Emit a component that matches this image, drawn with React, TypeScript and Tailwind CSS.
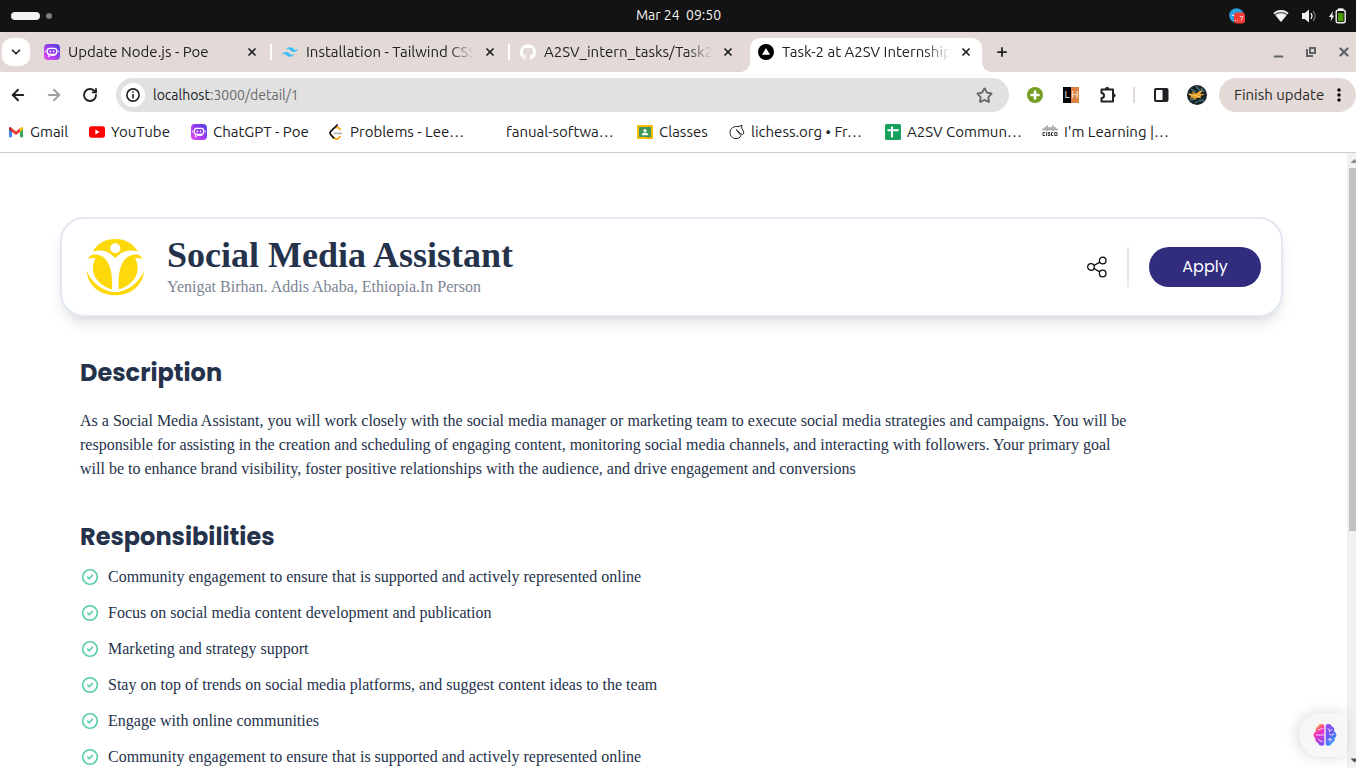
import React from "react";
import { SiTailwindcss, SiGithub } from "react-icons/si";
import { ArrowLeft, ArrowRight, ChevronDown, Minus, Plus, RotateCw, Star, X } from "lucide-react";

function PoeIcon({ id }: { id: string }) {
  return (
    <svg width="16" height="16" viewBox="0 0 16 16" className="block shrink-0" aria-hidden="true">
      <defs>
        <linearGradient id={id} x1="1" y1="0" x2="0" y2="1">
          <stop offset="0" stopColor="#4b3fe0" />
          <stop offset=".5" stopColor="#9b3df0" />
          <stop offset="1" stopColor="#f04bf5" />
        </linearGradient>
      </defs>
      <rect width="16" height="16" rx="4" fill={`url(#${id})`} />
      <rect x="3.2" y="4.4" width="9.6" height="6" rx="2.4" fill="none" stroke="#fff" strokeWidth="1.2" />
      <path d="M6.400 6.600v1.600M9.600 6.600v1.600" stroke="#fff" strokeWidth="1.300" />
      <path d="M1.8 6.5v1.8M14.2 6.5v1.8" stroke="#fff" strokeWidth="1" />
      <path d="M4.600 10.400v2.400l2-1.400h4.800" fill="none" stroke="#fff" strokeWidth="1" />
    </svg>
  );
}

function TriangleIcon() {
  return (
    <svg width="16" height="16" viewBox="0 0 16 16" className="block shrink-0" aria-hidden="true">
      <circle cx="8" cy="8" r="8" />
      <path d="M8 4l4 6.8H4z" fill="#fff" />
    </svg>
  );
}

function GmailIcon() {
  return (
    <svg width="16" height="16" viewBox="0 0 16 16" aria-hidden="true">
      <path d="M1 4v9.2h3V7z" fill="#4285f4" />
      <path d="M15 4v9.2h-3V7z" fill="#34a853" />
      <path d="M12 4.5L13 3.2c1-.7 2 0 2 1.2v1.2l-3 2.3z" fill="#fbbc04" />
      <path d="M4 4.5L3 3.2c-1-.7-2 0-2 1.2v1.2l3 2.3z" fill="#c5221f" />
      <path d="M4 4.2l4 3.1 4-3.1v3.7l-4 3-4-3z" fill="#ea4335" />
    </svg>
  );
}

function YouTubeIcon() {
  return (
    <svg width="16" height="16" viewBox="0 0 16 16" aria-hidden="true">
      <rect y="2.2" width="16" height="11.6" rx="2.4" fill="#f00" />
      <path d="M6.4 5.6v4.8L10.6 8z" fill="#fff" />
    </svg>
  );
}

function LeetIcon() {
  return (
    <svg width="16" height="16" viewBox="0 0 16 16" fill="none" strokeLinecap="round" strokeWidth="1.7" aria-hidden="true">
      <path d="M12.2 5.4l-1.8-1.6a2 2 0 0 0-2.6 0M3.2 11l3.4 3.4a2.6 2.6 0 0 0 3.6 0l1.8-1.8" stroke="#ffa116" />
      <path d="M6.4 9.3h7" stroke="#b3b3b3" />
      <path d="M9.2 1L3 7.2a2.7 2.7 0 0 0 0 3.8l2.6 2.8" stroke="#111" />
    </svg>
  );
}

function ClassroomIcon() {
  return (
    <svg width="16" height="16" viewBox="0 0 16 16" aria-hidden="true">
      <rect y="1" width="16" height="14" rx="1" fill="#fbbc04" />
      <rect x="2" y="3" width="12" height="10" fill="#3c9654" />
      <circle cx="8" cy="6.6" r="1.6" fill="#fff" />
      <path d="M4.6 11.2c0-1.8 1.7-2.4 3.4-2.4s3.4.6 3.4 2.4z" fill="#fff" />
      <path d="M9 13h4v1.4H9z" fill="#dba100" />
    </svg>
  );
}

function LichessIcon() {
  return (
    <svg width="16" height="16" viewBox="0 0 16 16" fill="none" stroke="#222" strokeWidth="1" strokeLinejoin="round" strokeLinecap="round" aria-hidden="true">
      <path d="M9.500 2.600L13 1.200l-.3 2.800c1 1.700 1.900 3.500 2.200 5.200l-1.400 1.300-1.600-.7L7.500 6M9.500 2.600C5.200 1.500 1 4.200 1 8.600c0 3.400 2.600 6 6 6 2.300 0 4-1 5-2.800-.5-1.300-2.800-2.800-4.500-5.800" />
    </svg>
  );
}

function SheetIcon() {
  return (
    <svg width="16" height="16" viewBox="0 0 16 16" aria-hidden="true">
      <rect width="16" height="16" rx="1.6" fill="#16a05d" />
      <path d="M7 2.400v11.200M2.400 6.200h11.200" stroke="#fff" strokeWidth="2" />
    </svg>
  );
}

function CiscoIcon() {
  return (
    <svg width="16" height="16" viewBox="0 0 16 16" fill="none" stroke="#333" aria-hidden="true">
      <path d="M1 4.600v1.800M3 3.200v3.200M5 1.500v5.500M7 3.200v3.200M9 3.200v3.200M11 1.500v5.500M13 3.200v3.200M15 4.600v1.800" strokeWidth=".8" />
      <path d="M3.200 8.600H1v2.900h2.200M4.700 8v4M8.200 8.600H6.400v1.400h1.500v1.500H6M11.200 8.600H9.500v2.900h1.700M12.700 8.600h2.300v2.900h-2.300z" strokeWidth="1" />
    </svg>
  );
}

function PuzzleIcon() {
  return (
    <svg width="18" height="18" viewBox="0 0 18 18" fill="none" stroke="#202124" strokeWidth="2" strokeLinejoin="round" aria-hidden="true">
      <path d="M2.500 3.500H14v12H2.500v-3.500a2.500 2.500 0 0 0 0-5z" />
      <path d="M6.500 3a1.700 1.700 0 0 1 3.400 0zM14.500 7.800a1.700 1.700 0 0 1 0 3.400z" fill="#202124" strokeWidth="1" />
    </svg>
  );
}

function AvatarIcon() {
  return (
    <svg width="20" height="20" viewBox="0 0 20 20" aria-hidden="true">
      <circle cx="10" cy="10" r="10" fill="#18242a" />
      <path d="M4 4l5 3M9 1l4 5M14 3l3 4M3 15l5-1M12 16l5-1M8 18l3-2" stroke="#4a7482" strokeWidth="1.300" />
      <path d="M1 8.500l5 .5-1-3 4 2.500 6-4-2 4 5 .8-5 2 1 2-4-.5-2 2-2-1.800-3 .5 1-2z" fill="#e09a26" />
      <path d="M2 9l7 2 6-5M9 11l5 1" stroke="#f9d36a" fill="none" strokeWidth=".9" />
    </svg>
  );
}

function TelegramTray() {
  return (
    <svg width="16" height="16" viewBox="0 0 16 16" aria-hidden="true">
      <circle cx="7.500" cy="7.500" r="7.300" fill="#2aa1de" />
      <path d="M2.500 7.500l3-1.300v2.400z" fill="#fff" />
      <rect x="5" y="4.500" width="11" height="11" rx="3" fill="#f23c34" />
      <path d="M6 12.500h1M8 12.500h1M10.800 8.500h3l-1.800 4.300" fill="none" stroke="#ffc9c5" />
    </svg>
  );
}

function WifiIcon() {
  return (
    <svg width="16" height="16" viewBox="0 0 16 16" aria-hidden="true">
      <path d="M.5 5c4.200-4 10.800-4 15 0L8 14z" fill="#777" />
      <path d="M.5 5c4.200-4 10.800-4 15 0l-.9 1.200C10.500 3 5.500 3 1.400 6.200z" fill="#f2f2f2" />
      <path d="M2.500 7.200c3.400-2.300 7.600-2.300 11 0L8 14z" fill="#f2f2f2" />
    </svg>
  );
}

function VolumeIcon() {
  return (
    <svg width="16" height="16" viewBox="0 0 16 16" fill="none" aria-hidden="true">
      <path d="M1 5h2.800L8 1.500v13L3.800 11H1z" fill="#f2f2f2" />
      <path d="M9.800 5.300c1.300 1.500 1.300 3.900 0 5.400" stroke="#f2f2f2" strokeWidth="1.300" />
      <path d="M12 3c2.800 2.800 2.800 7.200 0 10" stroke="#777" strokeWidth="1.200" />
    </svg>
  );
}

function BatteryIcon() {
  return (
    <svg width="17" height="16" viewBox="0 0 17 16" aria-hidden="true">
      <path d="M4 3L0 9h2.300L1.500 13.500 5.300 7.500H3.200z" fill="#f2f2f2" />
      <rect x="7.200" y="2.200" width="9" height="12.600" rx="1.800" fill="#131313" stroke="#f2f2f2" strokeWidth="1.400" />
      <path d="M9 .3h5.400v2H9z" fill="#f2f2f2" />
      <path d="M9 5h5.500v8.200H9z" fill="#4e9a06" />
    </svg>
  );
}

function CompanyLogo() {
  return (
    <svg width="60" height="60" viewBox="0 0 60 60" fill="#fdd80a" className="block shrink-0" role="img" aria-label="Yenigat Birhan">
      <path d="M7.500 14.500C12.500 6.500 20 2 30.200 2S48 6.500 53 14.500c-7-1.800-12.500-1.200-17.500 2L30.300 21 25 16.500C20 13.300 14.500 12.800 7.500 14.500z" />
      <circle cx="30.300" cy="11.300" r="5" fill="#fff" />
      <path d="M3 22c1.500-4 5-5 9.500-4.300 5.500.8 9 4.800 11.300 9.600 3 6.800 3.800 15.700 3.200 25.200C20.500 50.500 14.500 46.500 11 41.500c-3.500-5.500-4-12.500-1.500-18 .4-1.200.7-1.700 1.100-2.300-2.600-.4-5-.2-7.600.8z" />
      <path d="M57.600 22c-1.500-4-5-5-9.500-4.300-5.500.8-9 4.800-11.300 9.600-3 6.800-3.800 15.700-3.200 25.200 6.500-2 12.500-6 16-11 3.500-5.500 4-12.500 1.500-18-.4-1.200-.7-1.700-1.100-2.300 2.600-.4 5-.2 7.600.8z" />
      <path d="M1.800 34C6 44 13.500 51.500 27 55h6.500C47 51.500 54.500 44 58.800 34c-.3 14-13 24.300-28.500 24.300S2.200 48 1.800 34z" />
    </svg>
  );
}

function ShareIcon() {
  return (
    <svg width="22" height="22" viewBox="0 0 22 22" fill="none" stroke="#0a0a0a" strokeWidth="1.300" aria-hidden="true">
      <circle cx="5" cy="11" r="3.300" />
      <circle cx="16.700" cy="4.500" r="3.300" />
      <circle cx="16.700" cy="17.500" r="3.300" />
      <path d="M7.900 9.500l6-3.400M7.900 12.500l6 3.400" />
    </svg>
  );
}

function CheckCircle() {
  return (
    <svg width="20" height="20" viewBox="0 0 20 20" fill="none" stroke="#56cdad" strokeWidth="1.600" strokeLinecap="round" strokeLinejoin="round" className="block shrink-0" aria-hidden="true">
      <circle cx="10" cy="10" r="7.300" />
      <path d="M7.600 10.200l1.600 1.500 3.200-3.300" />
    </svg>
  );
}

function BrainIcon() {
  return (
    <svg width="24" height="24" viewBox="0 0 24 24" aria-hidden="true">
      <defs>
        <linearGradient id="brain-left" x1=".3" y1="0" x2=".7" y2="1">
          <stop offset="0" stopColor="#ffa51f" />
          <stop offset=".4" stopColor="#f02fc0" />
          <stop offset="1" stopColor="#7d4df5" />
        </linearGradient>
        <linearGradient id="brain-right" x1="0" y1="0" x2=".6" y2="1">
          <stop offset="0" stopColor="#9a4cf0" />
          <stop offset=".5" stopColor="#6a55f5" />
          <stop offset="1" stopColor="#28a5ff" />
        </linearGradient>
      </defs>
      <path d="M11.300 2.500C9.500.3 6 .8 5.300 3.500 3 4 2 6.300 3 8.300c-3 1.500-3.300 5.500-.5 7-.8 2.200.5 4 2.500 4.500.8 3.500 5 4 6.300 1.400z" fill="url(#brain-left)" />
      <path d="M12.700 2.500C14.500.3 18 .8 18.700 3.500 21 4 22 6.300 21 8.300c3 1.500 3.300 5.500.5 7 .8 2.200-.5 4-2.500 4.500-.8 3.500-5 4-6.300 1.400z" fill="url(#brain-right)" />
      <path d="M9.500 5.500H8.300C7.500 6.500 6.500 7 5.500 6.800M3.500 12h7M5.500 16.500c1 0 1.300 2 4 2M15 5.500l1.500 2 2.500-.8M16.500 7.500v1.500M21 11l-2.500 1.200-2-1M15 16.800l2-1.300 2 1.300M17 15.500v3" fill="none" stroke="#f3d9ff" strokeWidth="1" strokeLinecap="round" />
    </svg>
  );
}

const tabs = [
  { title: "Update Node.js - Poe", icon: <PoeIcon id="poe-tab" />, active: false, divider: true },
  { title: "Installation - Tailwind CSS", icon: <SiTailwindcss size={16} color="#38bdf8" />, active: false, divider: true },
  { title: "A2SV_intern_tasks/Task2", icon: <SiGithub size={16} color="#fff" />, active: false, divider: false },
  { title: "Task-2 at A2SV Internship", icon: <TriangleIcon />, active: true, divider: false },
];

const bookmarks = [
  { label: "Gmail", icon: <GmailIcon />, width: "w-[81px]" },
  { label: "YouTube", icon: <YouTubeIcon />, width: "w-[102px]" },
  { label: "ChatGPT - Poe", icon: <PoeIcon id="poe-mark" />, width: "w-[137px]" },
  { label: "Problems - Lee…", icon: <LeetIcon />, width: "w-[156px]" },
  { label: "fanual-softwa…", icon: null, width: "w-[153px]" },
  { label: "Classes", icon: <ClassroomIcon />, width: "w-[92px]" },
  { label: "lichess.org • Fr…", icon: <LichessIcon />, width: "w-[156px]" },
  { label: "A2SV Commun…", icon: <SheetIcon />, width: "w-[157px]" },
  { label: "I'm Learning |…", icon: <CiscoIcon />, width: "w-[153px]" },
];

const responsibilities = [
  "Community engagement to ensure that is supported and actively represented online",
  "Focus on social media content development and publication",
  "Marketing and strategy support",
  "Stay on top of trends on social media platforms, and suggest content ideas to the team",
  "Engage with online communities",
  "Community engagement to ensure that is supported and actively represented online",
];

function SystemBar() {
  return (
    <div className="grid h-8 shrink-0 grid-cols-3 items-center bg-[#131313] pr-[10px] pl-[11px] text-[#f2f2f2]">
      <div className="flex items-center gap-[6px]">
        <span className="h-2 w-[29px] rounded-full bg-[#f2f2f2]" />
        <span className="size-[6px] rounded-full bg-[#7d7d7d]" />
      </div>
      <time className="pb-[2px] text-center text-sm whitespace-pre">Mar 24  09:50</time>
      <div className="flex items-center justify-end gap-3">
        <span className="mr-4"><TelegramTray /></span>
        <WifiIcon />
        <VolumeIcon />
        <BatteryIcon />
      </div>
    </div>
  );
}

function TabStrip() {
  return (
    <div className="flex h-10 shrink-0 items-center bg-[#e3dad7] pr-[5px] pl-[2px]">
      <button aria-label="Search tabs" className="mr-1 flex size-7 shrink-0 items-center justify-center rounded-[10px] bg-white">
        <ChevronDown size={14} strokeWidth={3} />
      </button>
      {tabs.map((tab) => (
        <div key={tab.title} className="relative flex h-full w-[238px] min-w-0 items-center pr-3 pl-[10px]">
          {tab.active && (
            <div className="absolute top-[6px] right-1 bottom-0 left-[2px] rounded-t-[10px] bg-white">
              <span className="absolute bottom-0 -left-[10px] size-[10px] bg-[radial-gradient(circle_at_0_0,#e3dad7_10px,white_10px)]" />
              <span className="absolute -right-[10px] bottom-0 size-[10px] bg-[radial-gradient(circle_at_100%_0,#e3dad7_10px,white_10px)]" />
            </div>
          )}
          <div className="relative flex min-w-0 flex-1 items-center">
            <span className="shrink-0">{tab.icon}</span>
            <span className="mr-2 ml-2 min-w-0 flex-1 overflow-hidden mask-r-from-85% text-[15px] leading-5 whitespace-nowrap">{tab.title}</span>
            <button aria-label={`Close ${tab.title}`} className="flex size-4 shrink-0 items-center justify-center">
              <X size={12} strokeWidth={3.5} />
            </button>
          </div>
          {tab.divider && <span className="absolute top-3 right-0 h-4 w-[2px] bg-white" />}
        </div>
      ))}
      <button aria-label="New tab" className="ml-2 flex size-4 shrink-0 items-center justify-center">
        <Plus size={14} strokeWidth={3} />
      </button>
      <div className="ml-auto flex shrink-0 items-center gap-5 text-[#5f6368]">
        <button aria-label="Minimize" className="pt-2"><Minus size={13} strokeWidth={4} /></button>
        <button aria-label="Restore">
          <svg width="12" height="12" viewBox="0 0 12 12" fill="none" stroke="currentColor" strokeWidth="2" aria-hidden="true">
            <path d="M5 2h5v5H5zM2 3v7h6" />
          </svg>
        </button>
        <button aria-label="Close window"><X size={14} strokeWidth={4} /></button>
      </div>
    </div>
  );
}

function Toolbar() {
  return (
    <div className="flex h-[46px] shrink-0 items-center bg-white pl-[9px]">
      <div className="flex shrink-0 items-center gap-[18px]">
        <button aria-label="Back"><ArrowLeft size={18} strokeWidth={2.5} /></button>
        <button aria-label="Forward" className="text-[#a0a0a0]"><ArrowRight size={18} strokeWidth={2.5} /></button>
        <button aria-label="Reload" className="flex size-[18px] items-center justify-center"><RotateCw size={16} strokeWidth={2.750} /></button>
      </div>
      <div className="ml-[17px] flex h-[34px] min-w-0 flex-1 items-center rounded-full bg-[#e1e1e1] pr-4 pl-[5px]">
        <span className="mr-2 flex size-6 shrink-0 items-center justify-center rounded-full bg-white">
          <svg width="14" height="14" viewBox="0 0 14 14" fill="none" stroke="#202124" strokeWidth="1.600" aria-hidden="true">
            <circle cx="7" cy="7" r="6.100" />
            <path d="M7 6v4.500M7 3.300v1.500" />
          </svg>
        </span>
        <div className="relative min-w-0 flex-1 text-sm">
          <div aria-hidden="true" className="pointer-events-none leading-6 text-[#6b6b6b]"><span className="text-[#202124]">localhost</span>:3000/detail/1</div>
          <input aria-label="Address" defaultValue="localhost:3000/detail/1" className="absolute inset-0 w-full bg-transparent text-transparent outline-none" />
        </div>
        <button aria-label="Bookmark this page" className="text-[#5f6368]"><Star size={17} strokeWidth={2.5} /></button>
      </div>
      <div className="ml-[18px] flex shrink-0 items-center">
        <button aria-label="Add extension" className="mr-5 flex size-4 items-center justify-center rounded-full bg-[#769e25] text-white"><Plus size={12} strokeWidth={5} /></button>
        <button aria-label="LH extension" className="mr-5 flex size-4 text-[10px] leading-4 text-white">
          <span className="w-2 bg-black">L</span><span className="w-2 bg-[#de8244]">H</span>
        </button>
        <button aria-label="Extensions" className="mr-4"><PuzzleIcon /></button>
        <span className="mr-[18px] h-4 w-[2px] bg-[#e3dad7]" />
        <button aria-label="Side panel" className="mr-[18px]">
          <svg width="16" height="16" viewBox="0 0 16 16" aria-hidden="true">
            <rect x="2" y="2" width="12.500" height="12" rx="1" fill="#fff" stroke="#202124" strokeWidth="2" />
            <path d="M9.500 2h5v12h-5z" fill="#202124" />
          </svg>
        </button>
        <button aria-label="Profile" className="mr-3"><AvatarIcon /></button>
        <button className="flex h-[34px] w-[137px] items-center justify-between rounded-full bg-[#e3dad7] px-[15px] text-[15px] leading-5 whitespace-nowrap text-[#2d2a29]">
          Finish update
          <svg width="4" height="14" viewBox="0 0 4 14" aria-hidden="true">
            <circle cx="2" cy="2" r="1.700" /><circle cx="2" cy="7" r="1.700" /><circle cx="2" cy="12" r="1.700" />
          </svg>
        </button>
      </div>
    </div>
  );
}

function BookmarkBar() {
  return (
    <nav aria-label="Bookmarks" className="flex h-[35px] shrink-0 items-start overflow-hidden border-b border-[#cccccc] bg-white pt-1 pl-2">
      {bookmarks.map((item) => (
        <a key={item.label} href="#bookmark" className={`flex h-5 shrink-0 items-center gap-[6px] text-[15px] leading-5 whitespace-nowrap ${item.width}`}>
          <span className="size-4 shrink-0">{item.icon}</span>
          {item.label}
        </a>
      ))}
    </nav>
  );
}

function JobDetail() {
  return (
    <main className="min-w-0 flex-1 overflow-hidden bg-white pt-16 pr-16 pl-[60px] font-['Liberation_Serif',serif] text-[#25324b]">
      <header className="flex items-center rounded-3xl border-2 border-slate-200 px-5 py-4 shadow-lg">
        <div className="ml-[3px]"><CompanyLogo /></div>
        <div className="ml-[22px] min-w-0 flex-1">
          <h1 className="text-4xl font-bold">Social Media Assistant</h1>
          <p className="text-base text-[#7c8493]">Yenigat Birhan. Addis Ababa, Ethiopia.In Person</p>
        </div>
        <button aria-label="Share" className="mr-[19px]"><ShareIcon /></button>
        <span className="mr-5 h-10 w-[2px] bg-slate-200" />
        <button className="h-10 w-28 rounded-full bg-[#312c7e] font-['Poppins','Inter',sans-serif] text-base text-white">Apply</button>
      </header>
      <section className="mt-10 px-5">
        <h2 className="font-['Poppins','Inter',sans-serif] text-2xl font-bold">Description</h2>
        <p className="mt-5 max-w-[1050px] text-base">
          As a Social Media Assistant, you will work closely with the social media manager or marketing team to execute social media strategies and campaigns. You will be responsible for assisting in the creation and scheduling of engaging content, monitoring social media channels, and interacting with followers. Your primary goal will be to enhance brand visibility, foster positive relationships with the audience, and drive engagement and conversions
        </p>
      </section>
      <section className="mt-10 px-5">
        <h2 className="font-['Poppins','Inter',sans-serif] text-2xl font-bold">Responsibilities</h2>
        <ul className="mt-3 flex flex-col gap-3">
          {responsibilities.map((text, index) => (
            <li key={index} className="flex items-center gap-2 text-base"><CheckCircle />{text}</li>
          ))}
        </ul>
      </section>
    </main>
  );
}

function ScrollRail() {
  return (
    <div className="flex w-[9px] shrink-0 flex-col items-start overflow-hidden bg-[#f1f1f1] pl-[2px]" aria-hidden="true">
      <svg width="13" height="15" viewBox="0 0 13 15" className="shrink-0"><path d="M1.500 10L5.500 6l4 4z" fill="#8b8b8b" /></svg>
      <div className="h-[59%] w-[13px] bg-[#c1c1c1]" />
      <svg width="13" height="15" viewBox="0 0 13 15" className="mt-auto shrink-0"><path d="M1.500 5.500l4 4 4-4z" fill="#505050" /></svg>
    </div>
  );
}

export default function App() {
  return (
    <div className="flex h-screen flex-col overflow-hidden bg-white font-['Ubuntu','Noto_Sans',sans-serif] text-[#202124]">
      <SystemBar />
      <TabStrip />
      <Toolbar />
      <BookmarkBar />
      <div className="relative flex min-h-0 flex-1">
        <JobDetail />
        <button aria-label="Open assistant" className="absolute right-[9px] bottom-[11px] flex h-11 w-12 items-center justify-center rounded-l-full bg-[#f7f7f7] pl-1 shadow-[-2px_0_14px_rgba(0,0,0,0.15)]">
          <BrainIcon />
        </button>
        <ScrollRail />
      </div>
    </div>
  );
}
